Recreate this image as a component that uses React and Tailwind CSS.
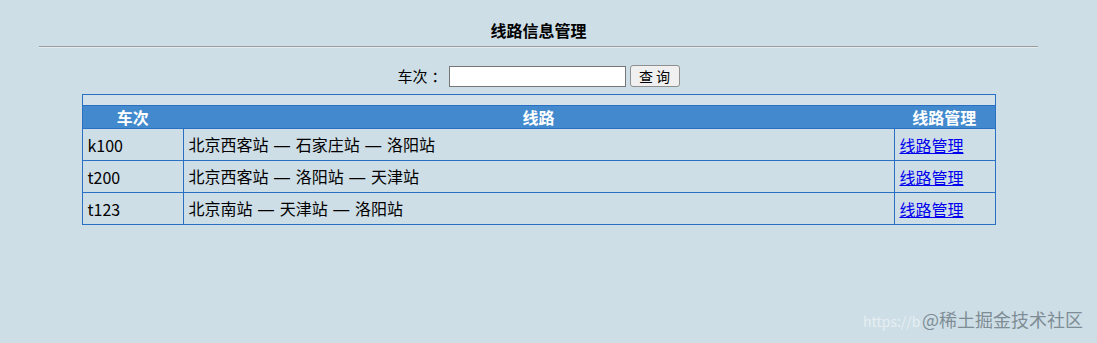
const routes = [
  { train: 'k100', stops: ['北京西客站', '石家庄站', '洛阳站'] },
  { train: 't200', stops: ['北京西客站', '洛阳站', '天津站'] },
  { train: 't123', stops: ['北京南站', '天津站', '洛阳站'] },
];

const Line = ({ stops }) => (
  <>
    {stops.map((s, i) => (
      <span key={s}>
        {i > 0 && (
          <>
            {' '}
            <span className="mx-[2px]" style={{ fontFamily: '"Liberation Sans", sans-serif' }}>—</span>{' '}
          </>
        )}
        {s}
      </span>
    ))}
  </>
);

const App = () => {
  return (
    <div
      className="relative min-h-[343px] w-full overflow-hidden bg-[#cedee6] text-black"
      style={{ fontFamily: '"Noto Sans CJK SC", "Liberation Sans", sans-serif' }}
    >
      <div className="w-[1077px]">
        {/* Title */}
        <h1 className="pt-[20px] text-center text-[16px] font-bold leading-[20px]">线路信息管理</h1>
        <div className="mx-[39px] mt-[6px] border-t border-b border-t-[#9c9c9c] border-b-[#e4ecf0]" />

        {/* Search */}
        <div className="mt-[17px] flex items-center justify-center text-[15px]">
          <span className="leading-[20px]">车次</span>
          <span className="ml-[4px] mr-[2px] leading-[20px]">：</span>
          <input
            type="text"
            className="h-[21px] w-[177px] border border-[#767676] bg-white px-1 text-[13px] outline-none"
          />
          <button className="ml-[4px] h-[22px] w-[50px] rounded-[3px] border border-[#8f8f8f] bg-[#f0f0f0] text-[14px] leading-[18px]">
            查 询
          </button>
        </div>

        {/* Table */}
        <table className="mx-auto mt-[7px] w-[914px] border-collapse text-[16px]">
          <colgroup>
            <col className="w-[101px]" />
            <col />
            <col className="w-[101px]" />
          </colgroup>
          <tbody>
            <tr className="h-[11px]">
              <td colSpan={3} className="border border-[#2a70c2] bg-[#d3e2ea] p-0" />
            </tr>
            <tr className="h-[23px] bg-[#428acd] text-[16px] font-bold leading-[20px] text-white">
              <th className="border-l border-[#2a70c2] p-0 text-center">车次</th>
              <th className="p-0 text-center">线路</th>
              <th className="border-r border-[#2a70c2] p-0 text-center">线路管理</th>
            </tr>
            {routes.map((r) => (
              <tr key={r.train} className="h-[32px] leading-[20px]">
                <td className="border border-[#2a70c2] px-[5px]">{r.train}</td>
                <td className="border border-[#2a70c2] px-[5px]">
                  <Line stops={r.stops} />
                </td>
                <td className="border border-[#2a70c2] px-[5px]">
                  <a href="#" className="text-[#0000ee] underline">线路管理</a>
                </td>
              </tr>
            ))}
          </tbody>
        </table>
      </div>

      {/* Watermark */}
      <div className="absolute left-[863px] top-[312px] text-[14px] leading-[18px] text-white/50">
        https://b</div>
      <div className="absolute left-[922px] top-[308px] text-[18px] leading-[22px] text-[#7e8d95]">
        @稀土掘金技术社区
      </div>
    </div>
  );
};

export default App;
